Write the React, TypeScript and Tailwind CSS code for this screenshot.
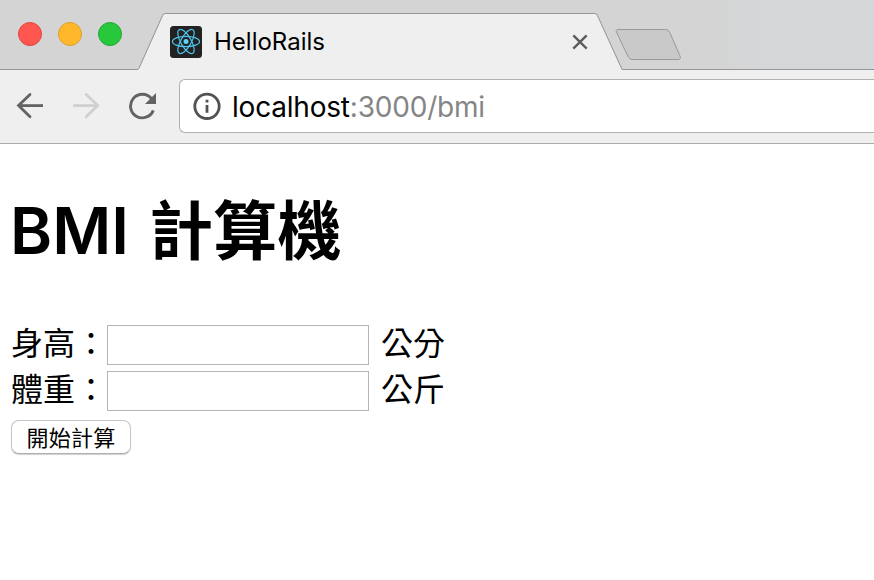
function TrafficLight({ className }: { className: string }) {
  return <span className={`size-6 rounded-full border ${className}`} />;
}

function ReactFavicon() {
  return (
    <svg width="32" height="32" viewBox="0 0 32 32" fill="none" className="shrink-0">
      <rect width="32" height="32" rx="3.5" fill="#222222" />
      <g stroke="#4fc4ea" strokeWidth="1.2">
        <ellipse cx="16" cy="15.5" rx="13.6" ry="5.2" />
        <ellipse cx="16" cy="15.5" rx="13.6" ry="5.2" transform="rotate(60 16 15.5)" />
        <ellipse cx="16" cy="15.5" rx="13.6" ry="5.2" transform="rotate(120 16 15.5)" />
      </g>
      <circle cx="16" cy="15.5" r="2.5" fill="#5fd3f7" />
    </svg>
  );
}

function TabStrip() {
  return (
    <div className="flex h-[70px] bg-linear-to-r from-[#d4d4d4] from-80% to-[#d5d7d9] to-90%">
      <div className="flex w-[138px] shrink-0 gap-4 border-b border-[#969696] pt-[22px] pl-[18px]">
        <TrafficLight className="border-[#e0443e] bg-[#ff5650]" />
        <TrafficLight className="border-[#dca02c] bg-[#ffb82a]" />
        <TrafficLight className="border-[#1fa832] bg-[#27c83c]" />
      </div>
      <svg width="27" height="57" viewBox="0 0 27 57" className="mt-[13px] shrink-0">
        <path d="M0 57V56.5Q.7 56 1.2 54.8L24.7 2.2Q25.6.5 27 .5V57Z" fill="#efefef" />
        <path d="M0 56.5Q.7 56 1.2 54.8L24.7 2.2Q25.6.5 27 .5" fill="none" stroke="#929292" />
      </svg>
      <div className="mt-[13px] flex w-[430px] shrink-0 border-t border-[#969696] bg-[#efefef] pt-3 pl-[5px]">
        <ReactFavicon />
        <span className="ml-3 w-[358px] shrink-0 font-['Inter',sans-serif] text-[24px] leading-[31px] text-black">HelloRails</span>
        <svg width="16" height="16" viewBox="0 0 16 16" className="mt-2 shrink-0" stroke="#5c5c5c" strokeWidth="2.4">
          <path d="M1.3 1.3L14.7 14.7M14.7 1.3L1.3 14.7" />
        </svg>
      </div>
      <svg width="27" height="57" viewBox="0 0 27 57" className="mt-[13px] shrink-0">
        <path d="M27 57V56.5Q26.8 56 26.4 55L2.3 2.2Q1.4.5 0 .5V57Z" fill="#efefef" />
        <path d="M27 56.5Q26.8 56 26.4 55L2.3 2.2Q1.4.5 0 .5" fill="none" stroke="#929292" />
      </svg>
      <div className="flex-1 border-b border-[#969696] pt-[28px]">
        <svg width="68" height="34" viewBox="0 0 68 34" className="-ml-2">
          <path
            d="M4 1.5H51.5Q54.5 1.5 55.8 4.5L65.8 27.5Q67.5 31.5 64.5 31.5H18.5Q15.5 31.5 14 28.5L2.8 4.8Q1.2 1.5 4 1.5Z"
            fill="#c9c9c9"
            stroke="#999999"
          />
        </svg>
      </div>
    </div>
  );
}

function Toolbar() {
  return (
    <div className="flex h-[74px] border-b border-[#acacac] bg-[#efefef] pt-[9px]">
      <div className="flex w-[179px] shrink-0 pt-[13px] pl-4">
        <svg width="28" height="28" viewBox="0 0 28 28" fill="none" stroke="#636363" strokeWidth="2.8" strokeLinecap="round">
          <path d="M14 2.5L2.5 13.6L14 24.8" />
          <path d="M3 13.6H27" strokeLinecap="butt" />
        </svg>
        <svg width="28" height="28" viewBox="0 0 28 28" fill="none" stroke="#d0d0d0" strokeWidth="2.8" strokeLinecap="round" className="ml-7">
          <path d="M14.2 2.5L25.7 13.6L14.2 24.8" />
          <path d="M25.2 13.6H1.2" strokeLinecap="butt" />
        </svg>
        <svg width="30" height="28" viewBox="0 0 30 28" fill="none" className="ml-[28px]">
          <path d="M25.3 18.4A11.8 11.8 0 1 1 23.4 6.5" stroke="#636363" strokeWidth="2.9" />
          <path d="M28 1V12H17Z" fill="#636363" />
        </svg>
      </div>
      <div className="flex h-[54px] flex-1 items-center rounded-l-[6px] border border-r-0 border-[#b0b0b0] bg-white pl-[12.5px]">
        <svg width="28" height="28" viewBox="0 0 28 28" fill="none" className="shrink-0">
          <circle cx="14" cy="14.3" r="12.2" stroke="#525252" strokeWidth="2.8" />
          <path d="M14 7.8V10.6M14 13V20.8" stroke="#525252" strokeWidth="2.8" />
        </svg>
        <span className="mt-px ml-[11.5px] font-['Inter',sans-serif] text-[28px] leading-8 tracking-[-0.2px] text-[#858585]">
          <span className="text-black">localhost</span>:3000/bmi
        </span>
      </div>
    </div>
  );
}

function Field({ label, unit }: { label: string; unit: string }) {
  return (
    <label className="flex h-[46px] items-start text-[32px] leading-[38px]">
      <span className="w-24 shrink-0 whitespace-nowrap">{label}</span>
      <input className="h-10 w-[262px] border border-[#b4b4b4] bg-white px-1 outline-none" />
      <span className="ml-3">{unit}</span>
    </label>
  );
}

export default function App() {
  return (
    <div className="h-[580px] w-[874px] overflow-hidden bg-white text-black">
      <TabStrip />
      <Toolbar />
      <main className="pt-[42px] pl-[11px] font-['Inter','Noto_Sans_CJK_TC',sans-serif]">
        <h1 className="flex h-[90px] gap-5 text-[64px] leading-[90px] font-semibold">
          <span className="-ml-px">BMI</span>
          <span className="font-bold tracking-[0.3px]">計算機</span>
        </h1>
        <form className="mt-[49px]">
          <Field label="身高：" unit="公分" />
          <Field label="體重：" unit="公斤" />
          <button
            type="button"
            className="mt-[3px] flex h-[34px] w-[120px] items-center justify-center rounded-[8px] border border-[#c6c6c6] border-b-[#b0b0b0] bg-white pt-px text-[22px] leading-8 tracking-[0.3px] shadow-[0_1px_1px_#00000030]"
          >
            開始計算
          </button>
        </form>
      </main>
    </div>
  );
}
